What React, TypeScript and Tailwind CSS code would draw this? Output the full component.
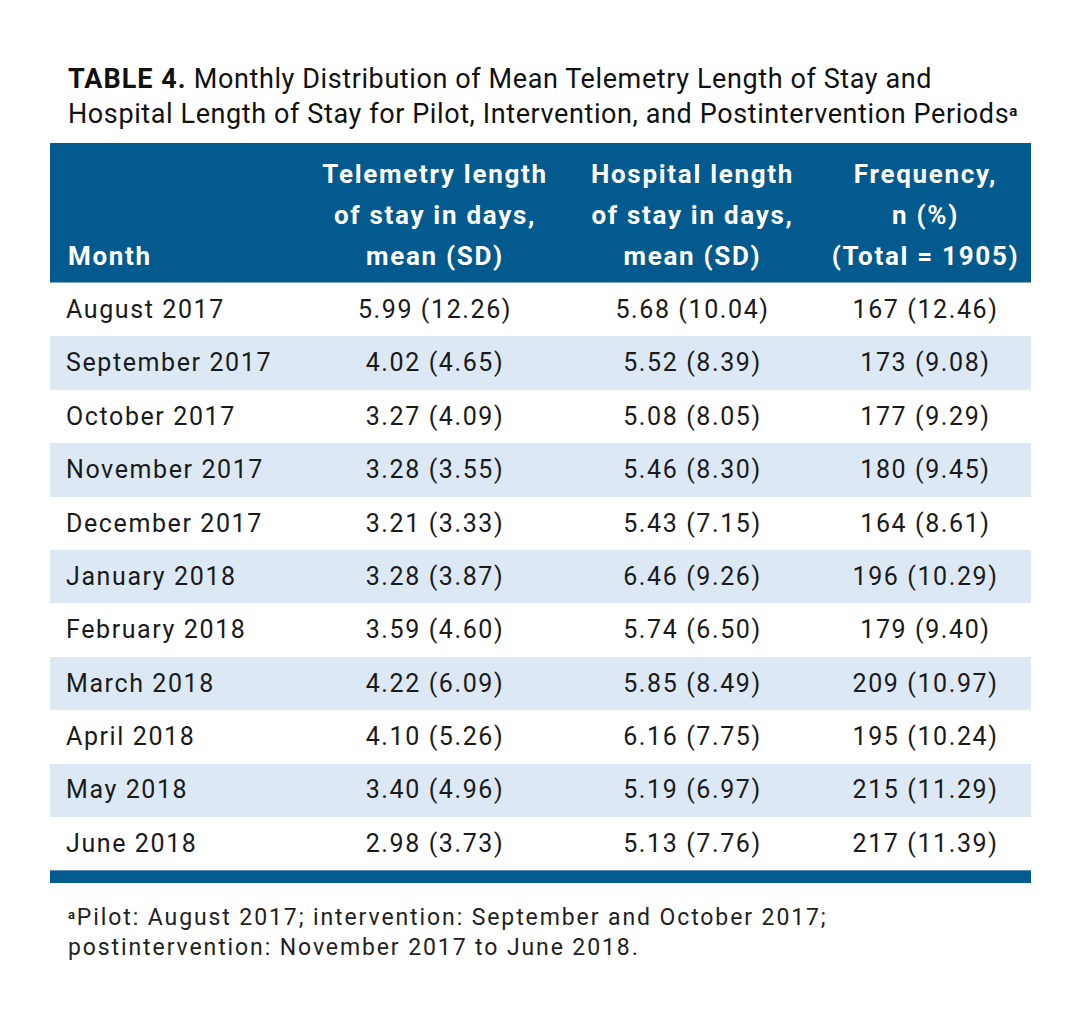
import React from 'react';

const ROWS: [string, string, string, string][] = [
  ['August 2017', '5.99 (12.26)', '5.68 (10.04)', '167 (12.46)'],
  ['September 2017', '4.02 (4.65)', '5.52 (8.39)', '173 (9.08)'],
  ['October 2017', '3.27 (4.09)', '5.08 (8.05)', '177 (9.29)'],
  ['November 2017', '3.28 (3.55)', '5.46 (8.30)', '180 (9.45)'],
  ['December 2017', '3.21 (3.33)', '5.43 (7.15)', '164 (8.61)'],
  ['January 2018', '3.28 (3.87)', '6.46 (9.26)', '196 (10.29)'],
  ['February 2018', '3.59 (4.60)', '5.74 (6.50)', '179 (9.40)'],
  ['March 2018', '4.22 (6.09)', '5.85 (8.49)', '209 (10.97)'],
  ['April 2018', '4.10 (5.26)', '6.16 (7.75)', '195 (10.24)'],
  ['May 2018', '3.40 (4.96)', '5.19 (6.97)', '215 (11.29)'],
  ['June 2018', '2.98 (3.73)', '5.13 (7.76)', '217 (11.39)'],
];

const cols = 'grid grid-cols-[255px_260px_255px_1fr]';

export default function App(): JSX.Element {
  return (
    <div className="min-h-[1023px] w-[1081px] bg-white pt-[62px] font-['Roboto',sans-serif] text-[#1a1a1a]">
      <h1 className="ml-[68px] text-[27px] leading-[35px] tracking-[0.6px] text-[#111]">
        <span className="font-bold tracking-[1px]">TABLE 4.</span> Monthly Distribution of Mean Telemetry Length of Stay and
        <br />
        Hospital Length of Stay for Pilot, Intervention, and Postintervention Periods<sup className="text-[15px] font-bold">a</sup>
      </h1>

      <div className="ml-[50px] mt-[11px] w-[981px]">
        <div className={`${cols} h-[139px] bg-[#035a8e] text-[26px] font-bold leading-[41px] tracking-[1.7px] text-white`}>
          <div className="flex items-end pb-[5px] pl-[18px]">Month</div>
          <div className="flex items-end justify-center pb-[5px] text-center">Telemetry length<br />of stay in days,<br />mean (SD)</div>
          <div className="flex items-end justify-center pb-[5px] text-center">Hospital length<br />of stay in days,<br />mean (SD)</div>
          <div className="flex items-end justify-center pb-[5px] text-center">Frequency,<br />n (%)<br />(Total = 1905)</div>
        </div>
        <div className="border-t border-[#7fa6c4]">
          {ROWS.map((r, i) => (
            <div key={r[0]} className={`${cols} h-[53.4px] items-center text-[25px] tracking-[1.6px] ${i % 2 === 1 ? 'bg-[#dce8f4]' : 'bg-white'}`}>
              <div className="pl-[16px]">{r[0]}</div>
              <div className="text-center">{r[1]}</div>
              <div className="text-center">{r[2]}</div>
              <div className="text-center">{r[3]}</div>
            </div>
          ))}
        </div>
        <div className="h-[13px] border-t border-[#5b8db5] bg-[#035a8e]" />
      </div>

      <p className="ml-[68px] mt-[20px] text-[23px] leading-[30px] tracking-[1.9px] text-[#222]">
        <sup className="text-[13px] font-bold">a</sup>Pilot: August 2017; intervention: September and October 2017;
        <br />
        postintervention: November 2017 to June 2018.
      </p>
    </div>
  );
}
